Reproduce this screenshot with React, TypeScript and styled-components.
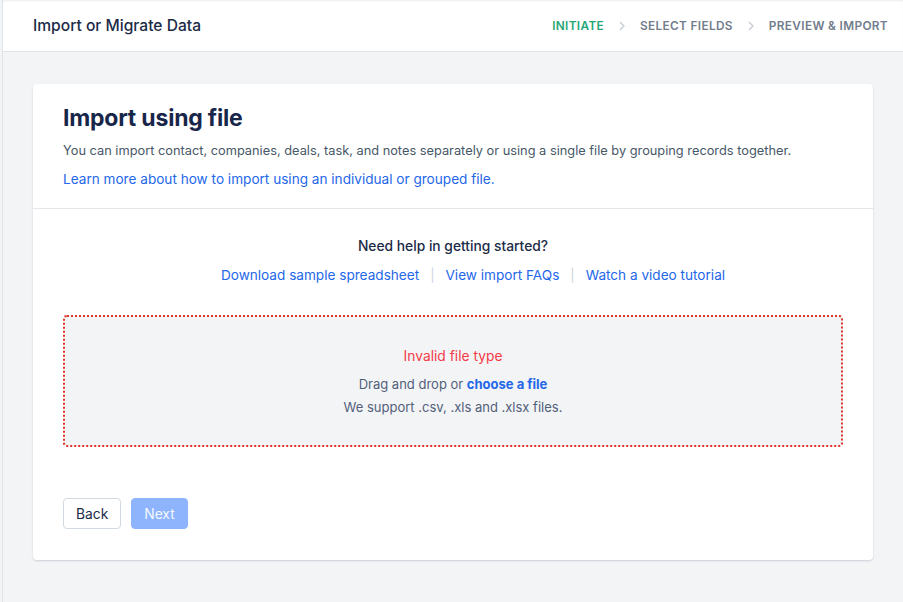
import React from "react";
import styled, { createGlobalStyle } from "styled-components";

const GlobalStyle = createGlobalStyle`
    html, body {
        margin: 0;
        padding: 0;
        background: #f3f4f6;
        font-family: Inter, "Noto Sans", "Liberation Sans", sans-serif;
        -webkit-font-smoothing: antialiased;
    }
`;

const Page = styled.div`
    min-height: 602px;
    margin-left: 2px;
    border-left: 1px solid #dfe3ea;
    background: #f3f4f6;
    display: flex;
    flex-direction: column;
`;

const TopBar = styled.header`
    height: 52px;
    background: #fff;
    border-bottom: 1px solid #dfe3ea;
    box-shadow: inset 0 2px 2px -1px rgba(20, 30, 50, 0.08);
    display: flex;
    align-items: center;
    justify-content: space-between;
    padding: 0 15px 0 30px;
    box-sizing: border-box;
`;

const PageTitle = styled.h1`
    margin: 0;
    font-size: 15.6px;
    font-weight: 500;
    color: #1c2b48;
`;

const Steps = styled.nav`
    display: flex;
    align-items: center;
    gap: 13px;
`;

const Step = styled.span<{ active?: boolean }>`
    font-size: 11.8px;
    font-weight: 600;
    letter-spacing: 0.35px;
    text-transform: uppercase;
    color: ${(props) => (props.active ? "#25a676" : "#717c8c")};
`;

const Chevron = styled.svg`
    width: 10px;
    height: 10px;
`;

const Main = styled.main`
    padding: 32px 30px 40px 30px;
`;

const Card = styled.section`
    background: #fff;
    border-radius: 4px;
    box-shadow: 0 1px 2px rgba(18, 52, 77, 0.18);
`;

const CardHead = styled.div`
    padding: 20px 30px 20px 30px;
    border-bottom: 1px solid #e3e6eb;
`;

const Title = styled.h2`
    margin: 0 0 10px 0;
    font-size: 23px;
    line-height: 28px;
    font-weight: 700;
    color: #18264a;
    letter-spacing: -0.2px;
`;

const Description = styled.p`
    margin: 0 0 10px 0;
    font-size: 12.8px;
    line-height: 18px;
    color: #475867;
`;

const Link = styled.a`
    display: block;
    font-size: 13.6px;
    line-height: 18px;
    color: #2467e8;
    text-decoration: none;
    cursor: pointer;
`;

const CardBody = styled.div`
    padding: 28px 30px 31px 30px;
`;

const Help = styled.div`
    display: flex;
    flex-direction: column;
    align-items: center;
    gap: 11px;
`;

const HelpTitle = styled.div`
    font-size: 13.8px;
    line-height: 18px;
    font-weight: 500;
    color: #1c2b48;
`;

const HelpLinks = styled.div`
    display: flex;
    align-items: center;
    gap: 11px;
    margin-left: 40px;
`;

const Divider = styled.span`
    color: #cfd5dc;
    font-size: 13px;
    line-height: 18px;
`;

const DropZone = styled.div`
    margin-top: 31px;
    height: 132px;
    box-sizing: border-box;
    border: 2px dotted #e0362c;
    border-radius: 4px;
    background: #f3f4f6;
    display: flex;
    flex-direction: column;
    align-items: center;
    padding-top: 30px;
`;

const ErrorText = styled.div`
    font-size: 13.8px;
    line-height: 18px;
    color: #f43b47;
    margin-bottom: 10px;
`;

const Hint = styled.div`
    font-size: 13px;
    line-height: 18px;
    color: #52607a;
    & + & {
        margin-top: 5px;
    }
`;

const Strong = styled.a`
    font-weight: 700;
    color: #2467e8;
    cursor: pointer;
`;

const Actions = styled.div`
    display: flex;
    gap: 10px;
    margin-top: 51px;
`;

const Button = styled.button<{ primary?: boolean }>`
    height: 31px;
    padding: 0 12px;
    border-radius: 4px;
    font-family: inherit;
    font-size: 13.8px;
    border: 1px solid ${(props) => (props.primary ? "#8db4fd" : "#d3d9e0")};
    background: ${(props) => (props.primary ? "#8db4fd" : "#fff")};
    color: ${(props) => (props.primary ? "#f4f8ff" : "#1c2b48")};
`;

function ChevronIcon() {
    return (
        <Chevron viewBox="0 0 10 10">
            <path d="M3 1 L7 5 L3 9" fill="none" stroke="#c3c9d1" strokeWidth="1.2" />
        </Chevron>
    );
}

function App() {
    return (
        <>
            <GlobalStyle />
            <Page>
                <TopBar>
                    <PageTitle>Import or Migrate Data</PageTitle>
                    <Steps>
                        <Step active>Initiate</Step>
                        <ChevronIcon />
                        <Step>Select Fields</Step>
                        <ChevronIcon />
                        <Step>Preview &amp; Import</Step>
                    </Steps>
                </TopBar>
                <Main>
                    <Card>
                        <CardHead>
                            <Title>Import using file</Title>
                            <Description>
                                You can import contact, companies, deals, task, and notes separately or using a single file by grouping records together.
                            </Description>
                            <Link>Learn more about how to import using an individual or grouped file.</Link>
                        </CardHead>
                        <CardBody>
                            <Help>
                                <HelpTitle>Need help in getting started?</HelpTitle>
                                <HelpLinks>
                                    <Link>Download sample spreadsheet</Link>
                                    <Divider>|</Divider>
                                    <Link>View import FAQs</Link>
                                    <Divider>|</Divider>
                                    <Link>Watch a video tutorial</Link>
                                </HelpLinks>
                            </Help>
                            <DropZone>
                                <ErrorText>Invalid file type</ErrorText>
                                <Hint>
                                    Drag and drop or <Strong>choose a file</Strong>
                                </Hint>
                                <Hint>We support .csv, .xls and .xlsx files.</Hint>
                            </DropZone>
                            <Actions>
                                <Button>Back</Button>
                                <Button primary>Next</Button>
                            </Actions>
                        </CardBody>
                    </Card>
                </Main>
            </Page>
        </>
    );
}

export default App;
